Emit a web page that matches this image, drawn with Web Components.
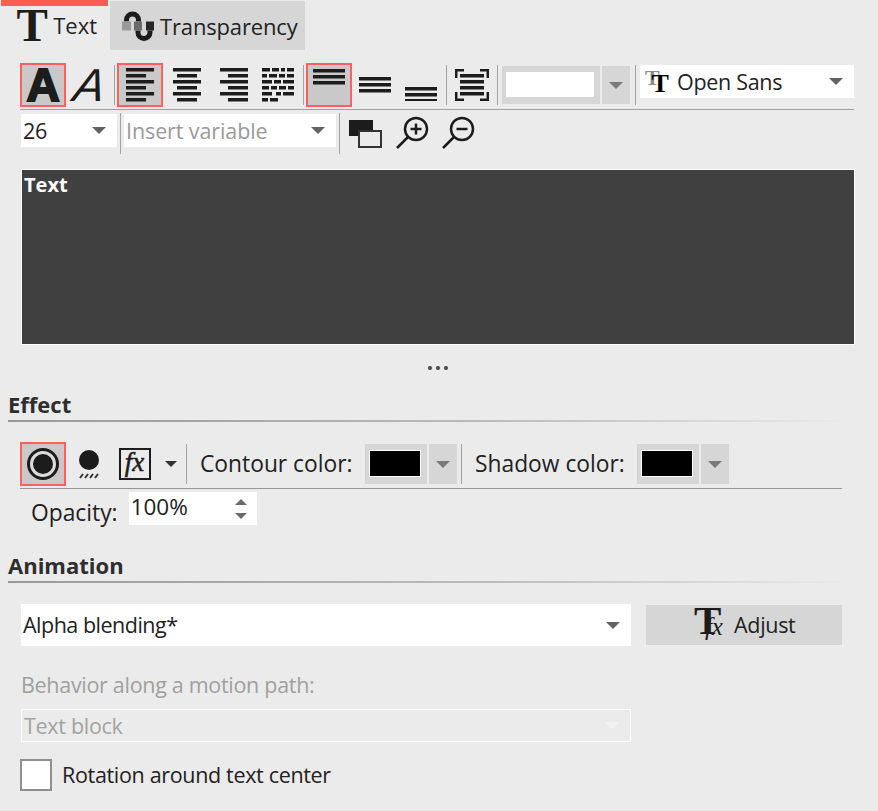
<!DOCTYPE html>
<html lang="en">
<head>
<meta charset="utf-8">
<title>Text properties</title>
<style>
  html, body { margin: 0; padding: 0; background: #ebebeb; }
  body { width: 878px; height: 811px; overflow: hidden; font: 21.5px "Open Sans", "Noto Sans", sans-serif; color: #222; }
</style>
</head>
<body>
<text-panel></text-panel>
<script>
class PanelTab extends HTMLElement {
    constructor() {
        super();
        this.attachShadow({ mode: 'open' });
        this.shadowRoot.innerHTML = `
            <style>
                :host { display: flex; align-items: center; box-sizing: border-box; height: 49px; gap: 4px; font-size: 22px; }
                :host([active]) { border-top: 6px solid #ff5a5a; height: 50px; margin-top: -1px; padding: 0 11px 6px 15px; width: 107px; gap: 5px; }
                :host(:not([active])) { background: #d6d6d6; padding: 0 0 0 12px; width: 195px; margin-left: 2px; letter-spacing: -0.15px; }
            </style>
            <slot name="icon"></slot><slot></slot>`;
    }
}
customElements.define('panel-tab', PanelTab);

class ToolBtn extends HTMLElement {
    constructor() {
        super();
        this.attachShadow({ mode: 'open' });
        this.shadowRoot.innerHTML = `
            <style>
                :host { display: flex; align-items: center; justify-content: center; box-sizing: border-box; height: 44px; width: var(--w, 46px); flex: none; border: 2px solid transparent; }
                :host([active]) { border-color: #ff5f5f; background: #c9c9c9; }
                ::slotted(svg) { display: block; flex: none; }
            </style>
            <slot></slot>`;
    }
}
customElements.define('tool-btn', ToolBtn);

class ToolSep extends HTMLElement {
    constructor() {
        super();
        this.attachShadow({ mode: 'open' });
        this.shadowRoot.innerHTML = `
            <style>:host { display: block; width: 1px; height: var(--h, 40px); background: #a3a3a3; flex: none; }</style>`;
    }
}
customElements.define('tool-sep', ToolSep);

class DropSelect extends HTMLElement {
    constructor() {
        super();
        this.attachShadow({ mode: 'open' });
        this.shadowRoot.innerHTML = `
            <style>
                :host { display: flex; align-items: center; box-sizing: border-box; background: #fff; flex: none; padding: 0 11px 0 2px; color: #222; letter-spacing: var(--track, -0.3px); }
                :host([muted]) { color: #9a9a9a; }
                :host([disabled]) { color: #a3a3a3; background: transparent; border: 1px solid #fff; padding-left: 2px; }
                .label { flex: 1; white-space: nowrap; display: flex; align-items: center; }
                .caret { width: 0; height: 0; border: 7px solid transparent; border-top: 7px solid #636363; border-bottom: 0; }
                :host([disabled]) .caret { border-top-color: #f2f2f2; }
            </style>
            <span class="label"><slot></slot></span><span class="caret"></span>`;
    }
}
customElements.define('drop-select', DropSelect);

class ColorPick extends HTMLElement {
    constructor() {
        super();
        this.attachShadow({ mode: 'open' });
        this.shadowRoot.innerHTML = `
            <style>
                :host { display: flex; gap: 2px; flex: none; height: 40px; }
                .well { box-sizing: border-box; width: var(--well, 62px); background: #d6d6d6; padding: 6px 6px 7px 4px; }
                .swatch { box-sizing: border-box; height: 100%; background: var(--swatch, #000); border: 1px solid #fff; }
                .btn { width: 28px; background: #d6d6d6; display: flex; align-items: center; justify-content: center; }
                .caret { width: 0; height: 0; border: 7px solid transparent; border-top: 7px solid #7a7a7a; border-bottom: 0; }
            </style>
            <div class="well"><div class="swatch"></div></div>
            <div class="btn"><span class="caret"></span></div>`;
    }
}
customElements.define('color-pick', ColorPick);

class SectionHead extends HTMLElement {
    constructor() {
        super();
        this.attachShadow({ mode: 'open' });
        this.shadowRoot.innerHTML = `
            <style>
                :host { display: block; color: #2e2e2e; font-weight: 700; font-size: 22px; line-height: 24px; width: 870px; }
                .rule { height: 2px; margin-top: 4px; background: linear-gradient(to right, #999 0%, #bbb 55%, #ebebeb 97%); }
            </style>
            <slot></slot><div class="rule"></div>`;
    }
}
customElements.define('section-head', SectionHead);

class SpinField extends HTMLElement {
    constructor() {
        super();
        this.attachShadow({ mode: 'open' });
        this.shadowRoot.innerHTML = `
            <style>
                :host { display: flex; align-items: center; justify-content: space-between; box-sizing: border-box; width: 128px; height: 33px; background: #fff; padding: 0 10px 3px 2px; font-size: 22.5px; }
                .arrows { display: flex; flex-direction: column; gap: 8px; margin-top: 3px; }
                .up, .down { width: 0; height: 0; border: 6px solid transparent; }
                .up { border-bottom: 6px solid #6b6b6b; border-top: 0; }
                .down { border-top: 6px solid #6b6b6b; border-bottom: 0; }
            </style>
            <slot></slot><div class="arrows"><span class="up"></span><span class="down"></span></div>`;
    }
}
customElements.define('spin-field', SpinField);

class CheckRow extends HTMLElement {
    constructor() {
        super();
        this.attachShadow({ mode: 'open' });
        this.shadowRoot.innerHTML = `
            <style>
                :host { display: flex; align-items: center; gap: 10px; letter-spacing: -0.33px; }
                .box { box-sizing: border-box; width: 32px; height: 32px; background: #fff; border: 2px solid #8f8f8f; flex: none; }
            </style>
            <div class="box"></div><slot></slot>`;
    }
}
customElements.define('check-row', CheckRow);

const bars = (rows) => rows.map(([x, y, w]) => `<rect x="${x}" y="${y}" width="${w}" height="3.5"/>`).join('');

class TextPanel extends HTMLElement {
    constructor() {
        super();
        this.attachShadow({ mode: 'open' });
        this.shadowRoot.innerHTML = `
            <style>
                :host { display: block; width: 878px; height: 811px; font-size: 21.5px; line-height: 30px; }
                svg { display: block; flex: none; }
                .tabs { display: flex; align-items: flex-start; padding: 1px 0 0 1px; height: 50px; }
                .tab-t { font: 700 47px/40px "Liberation Serif", serif; color: #1c1c1c; width: 33px; height: 40px; display: flex; justify-content: center; }
                .row { display: flex; align-items: center; }
                .row1 { margin: 12px 0 0 20px; height: 44px; padding-bottom: 2px; width: 834px; border-bottom: 1px solid #a0a0a0; }
                .row2 { margin: 3px 0 0 21px; height: 41px; align-items: flex-start; }
                .row2 drop-select { margin-top: 1px; }
                .editor { box-sizing: border-box; margin: 15px 0 0 21px; width: 834px; height: 176px; background: #404040; border: 1px solid #fff; color: #fff; font: 700 20px/29px "Open Sans", sans-serif; padding: 0 2px; }
                .dots { display: flex; gap: 4px; margin: 21px 0 0 428px; height: 4px; }
                .dots i { width: 4px; height: 4px; border-radius: 50%; background: #444; }
                .effect { margin: 22px 0 0 8px; }
                .row3 { margin: 20px 0 0 20px; height: 44px; padding-bottom: 2px; width: 822px; border-bottom: 1px solid #989898; font-size: 22.8px; }
                .row4 { margin: 3px 0 0 31px; height: 33px; gap: 11px; align-items: flex-start; font-size: 22.8px; }
                .row4 > span { margin-top: 6px; }
                .anim { margin: 28px 0 0 8px; }
                .row5 { margin: 21px 0 0 21px; height: 42px; gap: 15px; }
                .adjust { display: flex; align-items: center; gap: 4px; box-sizing: border-box; padding-left: 48px; width: 196px; height: 40px; background: #d6d6d6; color: #222; letter-spacing: -0.3px; }
                .behav { margin: 24px 0 0 21px; color: #a0a0a0; height: 30px; letter-spacing: -0.3px; }
                .rot { margin: 17px 0 0 20px; }
            </style>
            <div class="tabs">
                <panel-tab active>
                    <span slot="icon" class="tab-t">T</span>Text
                </panel-tab>
                <panel-tab>
                    <svg slot="icon" width="34" height="34" viewBox="0 0 34 34">
                        <path d="M4.5 12.5V11a6 6 0 0 1 12 0v1.5M16 21.5v2a6 6 0 0 0 12 0v-2" fill="none" stroke="#1c1c1c" stroke-width="5"/>
                        <rect x="0" y="12.5" width="9" height="9" fill="#9a9a9a"/>
                        <rect x="12" y="12.5" width="8" height="9" fill="#6a6a6a"/>
                        <rect x="24" y="12.5" width="8" height="9" fill="#262626"/>
                    </svg>Transparency
                </panel-tab>
            </div>

            <div class="row row1">
                <tool-btn active><svg width="42" height="52" viewBox="0 0 42 52"><text x="21" y="42" text-anchor="middle" style="font:700 46px 'Liberation Sans',sans-serif;stroke:#1c1c1c;stroke-width:2px" fill="#1c1c1c">A</text></svg></tool-btn>
                <tool-btn><svg width="42" height="52" viewBox="0 0 42 52"><text transform="translate(19 42) skewX(-10)" text-anchor="middle" style="font:italic 400 46px 'Liberation Sans',sans-serif" fill="#1c1c1c">A</text></svg></tool-btn>
                <tool-sep style="margin:0 2px"></tool-sep>
                <tool-btn active><svg width="28" height="34" viewBox="0 0 28 34" fill="#1c1c1c">${bars([[0,0,28],[0,6,20],[0,12,28],[0,18,20],[0,24,28],[0,30,20]])}</svg></tool-btn>
                <tool-btn style="--w:48px"><svg width="28" height="34" viewBox="0 0 28 34" fill="#1c1c1c">${bars([[0,0,28],[4,6,20],[0,12,28],[4,18,20],[0,24,28],[4,30,20]])}</svg></tool-btn>
                <tool-btn><svg width="28" height="34" viewBox="0 0 28 34" fill="#1c1c1c">${bars([[0,0,28],[8,6,20],[0,12,28],[8,18,20],[0,24,28],[8,30,20]])}</svg></tool-btn>
                <tool-btn style="--w:42px"><svg width="32" height="34" viewBox="0 0 32 34" fill="#1c1c1c">${bars([[0,0,8],[10,0,7],[19,0,4],[25,0,7],[0,6,5],[7,6,8],[17,6,6],[25,6,7],[0,12,10],[12,12,7],[21,12,11],[0,18,7],[9,18,6],[17,18,7],[26,18,6],[0,24,10],[14,24,5],[21,24,11],[0,30,6],[8,30,8]])}</svg></tool-btn>
                <tool-sep style="margin:0 2px 0 4px"></tool-sep>
                <tool-btn active><svg width="32" height="32" viewBox="0 0 32 32" fill="#1c1c1c">${bars([[0,0,32],[0,6,32],[0,12,32]])}</svg></tool-btn>
                <tool-btn><svg width="32" height="32" viewBox="0 0 32 32" fill="#1c1c1c">${bars([[0,8,32],[0,14,32],[0,20,32]])}</svg></tool-btn>
                <tool-btn><svg width="32" height="32" viewBox="0 0 32 32" fill="#1c1c1c">${bars([[0,18,32],[0,24,32],[0,28.5,0],[0,30,32]])}</svg></tool-btn>
                <tool-sep style="margin-left:2px"></tool-sep>
                <tool-btn style="--w:50px"><svg width="34" height="32" viewBox="0 0 34 32" fill="#1c1c1c">${bars([[5,5,24],[5,11,24],[5,17,24],[5,23,24]])}<path d="M1.2 9V1.2H9M25 1.2h7.8V9M1.2 23v7.8H9M25 30.8h7.8V23" fill="none" stroke="#1c1c1c" stroke-width="2.5"/></svg></tool-btn>
                <tool-sep></tool-sep>
                <color-pick style="--well:98px;--swatch:#fff;margin-left:4px;height:38px"></color-pick>
                <tool-sep style="margin-left:5px"></tool-sep>
                <drop-select style="margin-left:4px;width:214px;height:33px;margin-top:-7px;padding-left:5px">
                    <svg width="26" height="34" viewBox="0 0 26 34" style="margin-right:6px"><text x="0" y="20" style="font:700 22px 'Liberation Serif',serif" fill="#000"><tspan fill="#8a8a8a">T</tspan><tspan dx="-8" dy="7" style="font-size:26px">T</tspan></text></svg>Open Sans
                </drop-select>
            </div>

            <div class="row row2">
                <drop-select style="width:96px;height:33px">26</drop-select>
                <tool-sep style="margin:0 3px;--h:41px"></tool-sep>
                <drop-select muted style="width:212px;height:33px;--track:-0.1px">Insert variable</drop-select>
                <tool-sep style="margin:0 9px 0 3px;--h:41px"></tool-sep>
                <svg width="34" height="32" viewBox="0 0 34 32" style="margin-top:4px"><rect x="0" y="3" width="24" height="16" fill="#1c1c1c"/><rect x="10" y="14" width="22" height="16" fill="#ebebeb" stroke="#333" stroke-width="2"/></svg>
                <svg width="33" height="34" viewBox="0 0 33 34" style="margin:3px 0 0 13px"><circle cx="20" cy="13" r="11" fill="none" stroke="#1c1c1c" stroke-width="2.5"/><path d="M12 21L1 32" stroke="#1c1c1c" stroke-width="2.5"/><path d="M14.5 13h11M20 7.5v11" stroke="#1c1c1c" stroke-width="2.5"/></svg>
                <svg width="33" height="34" viewBox="0 0 33 34" style="margin:3px 0 0 13px"><circle cx="20" cy="13" r="11" fill="none" stroke="#1c1c1c" stroke-width="2.5"/><path d="M12 21L1 32" stroke="#1c1c1c" stroke-width="2.5"/><path d="M14.5 13h11" stroke="#1c1c1c" stroke-width="2.5"/></svg>
            </div>

            <div class="editor">Text</div>
            <div class="dots"><i></i><i></i><i></i></div>

            <section-head class="effect">Effect</section-head>
            <div class="row row3">
                <tool-btn active><svg width="32" height="32" viewBox="0 0 32 32"><circle cx="16" cy="16" r="14.5" fill="#dcdcdc" stroke="#1c1c1c" stroke-width="3"/><circle cx="16" cy="16" r="10" fill="#1c1c1c"/></svg></tool-btn>
                <svg width="26" height="34" viewBox="0 0 26 34" style="margin-left:10px"><circle cx="13" cy="13" r="10" fill="#1c1c1c"/><path d="M4 31l3-4M9 31l3-4M14 31l3-4M19 31l3-4" stroke="#333" stroke-width="2"/></svg>
                <svg width="32" height="32" viewBox="0 0 32 32" style="margin-left:17px"><rect x="1" y="1" width="30" height="30" fill="#ebebeb" stroke="#1c1c1c" stroke-width="2"/><text x="15.5" y="23" text-anchor="middle" style="font:italic 400 27px 'Liberation Serif',serif;stroke:#1c1c1c;stroke-width:.5px" fill="#1c1c1c">fx</text></svg>
                <span style="width:0;height:0;border:6px solid transparent;border-top:6px solid #333;border-bottom:0;margin:0 9px 0 14px"></span>
                <tool-sep></tool-sep>
                <span style="margin-left:13px;width:165px">Contour color:</span>
                <color-pick></color-pick>
                <tool-sep style="margin:0 13px 0 4px"></tool-sep>
                <span style="width:162px">Shadow color:</span>
                <color-pick></color-pick>
            </div>
            <div class="row row4"><span>Opacity:</span><spin-field>100%</spin-field></div>

            <section-head class="anim">Animation</section-head>
            <div class="row row5">
                <drop-select style="width:610px;height:42px;--track:-0.5px">Alpha blending*</drop-select>
                <div class="adjust">
                    <svg width="36" height="44" viewBox="0 0 36 44" style="margin:-2px 0"><text x="0" y="31" style="font:700 41px 'Liberation Serif',serif" fill="#1c1c1c">T<tspan dx="-16" dy="1" style="font:italic 400 25px 'Liberation Serif',serif">fx</tspan></text></svg>Adjust
                </div>
            </div>
            <div class="behav">Behavior along a motion path:</div>
            <drop-select disabled style="margin:9px 0 0 21px;width:610px;height:33px">Text block</drop-select>
            <check-row class="rot">Rotation around text center</check-row>
        `;
    }
}
customElements.define('text-panel', TextPanel);
</script>
</body>
</html>
